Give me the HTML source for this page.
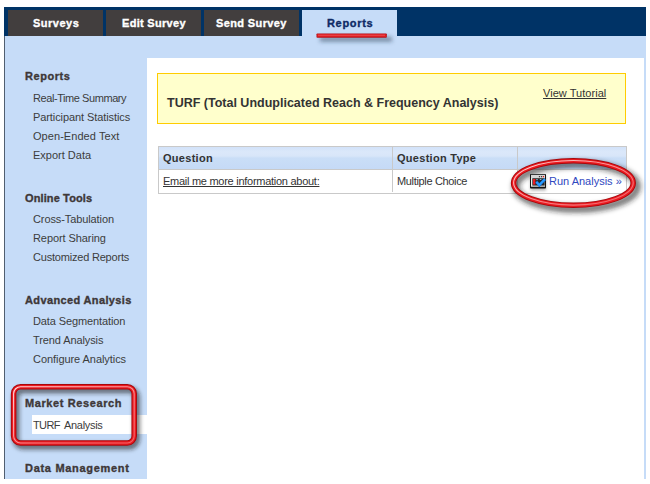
<!DOCTYPE html>
<html><head><meta charset="utf-8">
<style>
html,body{margin:0;padding:0;background:#fff;width:650px;height:484px;overflow:hidden;position:relative;font-family:"Liberation Sans",sans-serif;}
.a{position:absolute;}
.t{position:absolute;white-space:nowrap;line-height:14px;}
#nav{left:4px;top:7px;width:642px;height:29px;background:#003366;}
.tab{position:absolute;top:10px;width:95px;height:26px;background:#423e3e;}
.tb{font-weight:bold;font-size:11px;color:#fff;-webkit-text-stroke:0.35px currentColor;}
#frame{left:4px;top:36px;width:642px;height:443px;background:#c6dcf8;}
#lline{left:4px;top:36px;width:1px;height:443px;background:#505e70;}
#content{left:147px;top:58px;width:497px;height:421px;background:#fff;}
.h{font-weight:bold;font-size:11px;color:#3e3838;-webkit-text-stroke:0.35px #3e3838;}
.i{font-size:11px;color:#3c3c3c;}
#yb{left:157px;top:73px;width:467px;height:49px;background:#ffffcc;border:1px solid #ffcc00;}
#thd{left:159px;top:147px;width:467px;height:22px;background:linear-gradient(#d2e2f9 0px,#dbe8fa 5px,#d8e6f9 9px,#cadef7 11px,#c5daf6 22px);border-bottom:1px solid #c9c9c9;}
#tbl{left:158px;top:146px;width:467px;height:46px;border:1px solid #c9c9c9;}
.ttl{font-weight:bold;font-size:12.5px;color:#333;}
.sm{font-size:11px;color:#333;}
.smb{font-size:11px;color:#333;font-weight:bold;}
.u{text-decoration:underline;}
</style></head><body>
<div class="a" id="nav"></div>
<div class="tab" style="left:8px"></div>
<div class="tab" style="left:106px"></div>
<div class="tab" style="left:204px"></div>
<div class="tab" style="left:302px;background:#c6dcf8"></div>
<div class="a" id="frame"></div>
<div class="a" id="lline"></div>
<div class="a" id="content"></div>
<div class="a" style="left:32px;top:415px;width:115px;height:19px;background:#fff"></div>
<div class="a" id="yb"></div>
<div class="a" id="tbl"></div>
<div class="a" id="thd"></div>
<div class="a" style="left:392px;top:147px;width:1px;height:45px;background:#c9c9c9"></div>
<div class="a" style="left:517px;top:147px;width:1px;height:45px;background:#c9c9c9"></div>
<div id="tab1" class="t tb" style="left:33px;top:16px;letter-spacing:0.5px;">Surveys</div>
<div id="tab2" class="t tb" style="left:122px;top:16px;letter-spacing:0.3px;">Edit Survey</div>
<div id="tab3" class="t tb" style="left:216px;top:16px;letter-spacing:0.38px;">Send Survey</div>
<div id="tab4" class="t tb" style="left:327px;top:16px;letter-spacing:0.67px;color:#0f2b66">Reports</div>
<div id="h1" class="t h" style="left:25px;top:69px;letter-spacing:0.55px;">Reports</div>
<div id="i1" class="t i" style="left:33px;top:91px;letter-spacing:-0.43px;">Real-Time Summary</div>
<div id="i2" class="t i" style="left:33px;top:110px;letter-spacing:-0.09px;">Participant Statistics</div>
<div id="i3" class="t i" style="left:33px;top:129px;letter-spacing:0.06px;">Open-Ended Text</div>
<div id="i4" class="t i" style="left:33px;top:148px;letter-spacing:0px;">Export Data</div>
<div id="h2" class="t h" style="left:25px;top:191px;letter-spacing:0.12px;">Online Tools</div>
<div id="i5" class="t i" style="left:33px;top:212px;letter-spacing:-0.1px;">Cross-Tabulation</div>
<div id="i6" class="t i" style="left:33px;top:231px;letter-spacing:-0.08px;">Report Sharing</div>
<div id="i7" class="t i" style="left:33px;top:250px;letter-spacing:-0.2px;">Customized Reports</div>
<div id="h3" class="t h" style="left:25px;top:293px;letter-spacing:0.37px;">Advanced Analysis</div>
<div id="i8" class="t i" style="left:33px;top:314px;letter-spacing:-0.11px;">Data Segmentation</div>
<div id="i9" class="t i" style="left:33px;top:333px;letter-spacing:-0.1px;">Trend Analysis</div>
<div id="i10" class="t i" style="left:33px;top:352px;letter-spacing:-0.06px;">Configure Analytics</div>
<div id="h4" class="t h" style="left:25px;top:396px;letter-spacing:0.6px;">Market Research</div>
<div id="i11" class="t i" style="left:33px;top:418px;letter-spacing:0px;word-spacing:1px"><span style="letter-spacing:-0.6px">TURF</span> <span style="letter-spacing:-0.3px">Analysis</span></div>
<div id="h5" class="t h" style="left:25px;top:461px;letter-spacing:0.7px;">Data Management</div>
<div id="ttl" class="t ttl" style="left:167px;top:96px;letter-spacing:0px;">TURF (Total Unduplicated Reach &amp; Frequency Analysis)</div>
<div id="vt" class="t sm u" style="left:543px;top:86px;letter-spacing:0.04px;">View Tutorial</div>
<div id="q1" class="t smb" style="left:163px;top:151px;letter-spacing:0.28px;">Question</div>
<div id="q2" class="t smb" style="left:397px;top:151px;letter-spacing:0.28px;">Question Type</div>
<div id="em" class="t sm u" style="left:163px;top:174px;letter-spacing:-0.27px;">Email me more information about:</div>
<div id="mc" class="t sm" style="left:397px;top:174px;letter-spacing:-0.34px;">Multiple Choice</div>
<div id="ra" class="t sm" style="left:549px;top:174px;letter-spacing:0px;color:#2f48c0">Run Analysis &raquo;</div>
<svg class="a" style="left:0;top:0" width="650" height="484" viewBox="0 0 650 484">
<defs>
<filter id="bl" x="-20%" y="-50%" width="140%" height="200%"><feGaussianBlur stdDeviation="2.2"/></filter>
<filter id="bl2" x="-20%" y="-100%" width="140%" height="300%"><feGaussianBlur stdDeviation="1.5"/></filter>
<linearGradient id="hg" x1="0" y1="0" x2="1" y2="1"><stop offset="0" stop-color="#fff" stop-opacity="0.85"/><stop offset="0.6" stop-color="#fff" stop-opacity="0.45"/><stop offset="1" stop-color="#fff" stop-opacity="0.3"/></linearGradient>
<filter id="bl3" x="-20%" y="-50%" width="140%" height="200%"><feGaussianBlur stdDeviation="2.6"/></filter>
<filter id="bl4" x="-20%" y="-150%" width="140%" height="400%"><feGaussianBlur stdDeviation="1.9"/></filter>
</defs>
<!-- reports underline -->
<rect x="320" y="37" width="72" height="4.5" fill="#2a3850" fill-opacity="0.55" filter="url(#bl4)"/>
<rect x="316.5" y="33.4" width="70.3" height="4.3" rx="0.8" fill="#b0121a"/>
<rect x="317.2" y="34.1" width="68.9" height="2.9" rx="0.5" fill="#dc1c22"/>
<rect x="318" y="34.8" width="67" height="0.9" fill="#ff8080" fill-opacity="0.5"/>
<!-- ellipse -->
<ellipse cx="576.5" cy="186.5" rx="60.5" ry="22.5" fill="none" stroke="#222" stroke-opacity="0.6" stroke-width="7.5" filter="url(#bl3)"/>
<ellipse cx="573.4" cy="183" rx="59.8" ry="22.3" fill="none" stroke="#a8070b" stroke-width="5.5"/>
<ellipse cx="573.4" cy="183" rx="59.8" ry="22.3" fill="none" stroke="#ec1a20" stroke-width="3.6"/>
<ellipse cx="573.4" cy="182.8" rx="59.8" ry="22.3" fill="none" stroke="url(#hg)" stroke-width="1.1"/>
<!-- rounded rect -->
<rect x="16" y="390" width="120.6" height="56.3" rx="7" fill="none" stroke="#222" stroke-opacity="0.6" stroke-width="6.5" filter="url(#bl)"/>
<rect x="13.6" y="386.7" width="120.6" height="56.3" rx="7" fill="none" stroke="#a8070b" stroke-width="5.5"/>
<rect x="13.6" y="386.7" width="120.6" height="56.3" rx="7" fill="none" stroke="#ec1a20" stroke-width="3.6"/>
<rect x="13.6" y="386.7" width="120.6" height="56.3" rx="7" fill="none" stroke="url(#hg)" stroke-width="1.1"/>
<!-- icon -->
<g transform="translate(530,174)">
<rect x="0.5" y="2" width="15.5" height="14.5" fill="#000" opacity="0.3" filter="url(#bl2)"/>
<rect x="0" y="0" width="16" height="14.6" rx="0.8" fill="#151515"/>
<rect x="1" y="0.9" width="14" height="11.8" fill="#ececec"/>
<rect x="1" y="0.9" width="14" height="3" fill="#d6d6d6"/>
<rect x="8.8" y="2" width="1.3" height="1.3" rx="0.6" fill="#2a2a2a"/>
<rect x="10.9" y="2" width="1.3" height="1.3" rx="0.6" fill="#2a2a2a"/>
<rect x="12.8" y="2" width="1.3" height="1.3" rx="0.6" fill="#e00"/>
<rect x="2.3" y="4.2" width="12.4" height="7.4" fill="#262626"/>
<rect x="3" y="5" width="2.4" height="5.6" fill="#ea1a20"/>
<rect x="6.2" y="5.2" width="1.6" height="0.9" fill="#8cc8e8"/>
<rect x="9.8" y="5" width="1.6" height="0.9" fill="#8cc8e8"/>
<path d="M6.3 7.8 L9.3 11.2 L14.9 5.2" fill="none" stroke="#0f6fd8" stroke-width="2.8"/>
<path d="M6.3 7.8 L9.3 11.2 L14.9 5.2" fill="none" stroke="#2a9cff" stroke-width="1.8"/>
</g>
</svg>
</body></html>
